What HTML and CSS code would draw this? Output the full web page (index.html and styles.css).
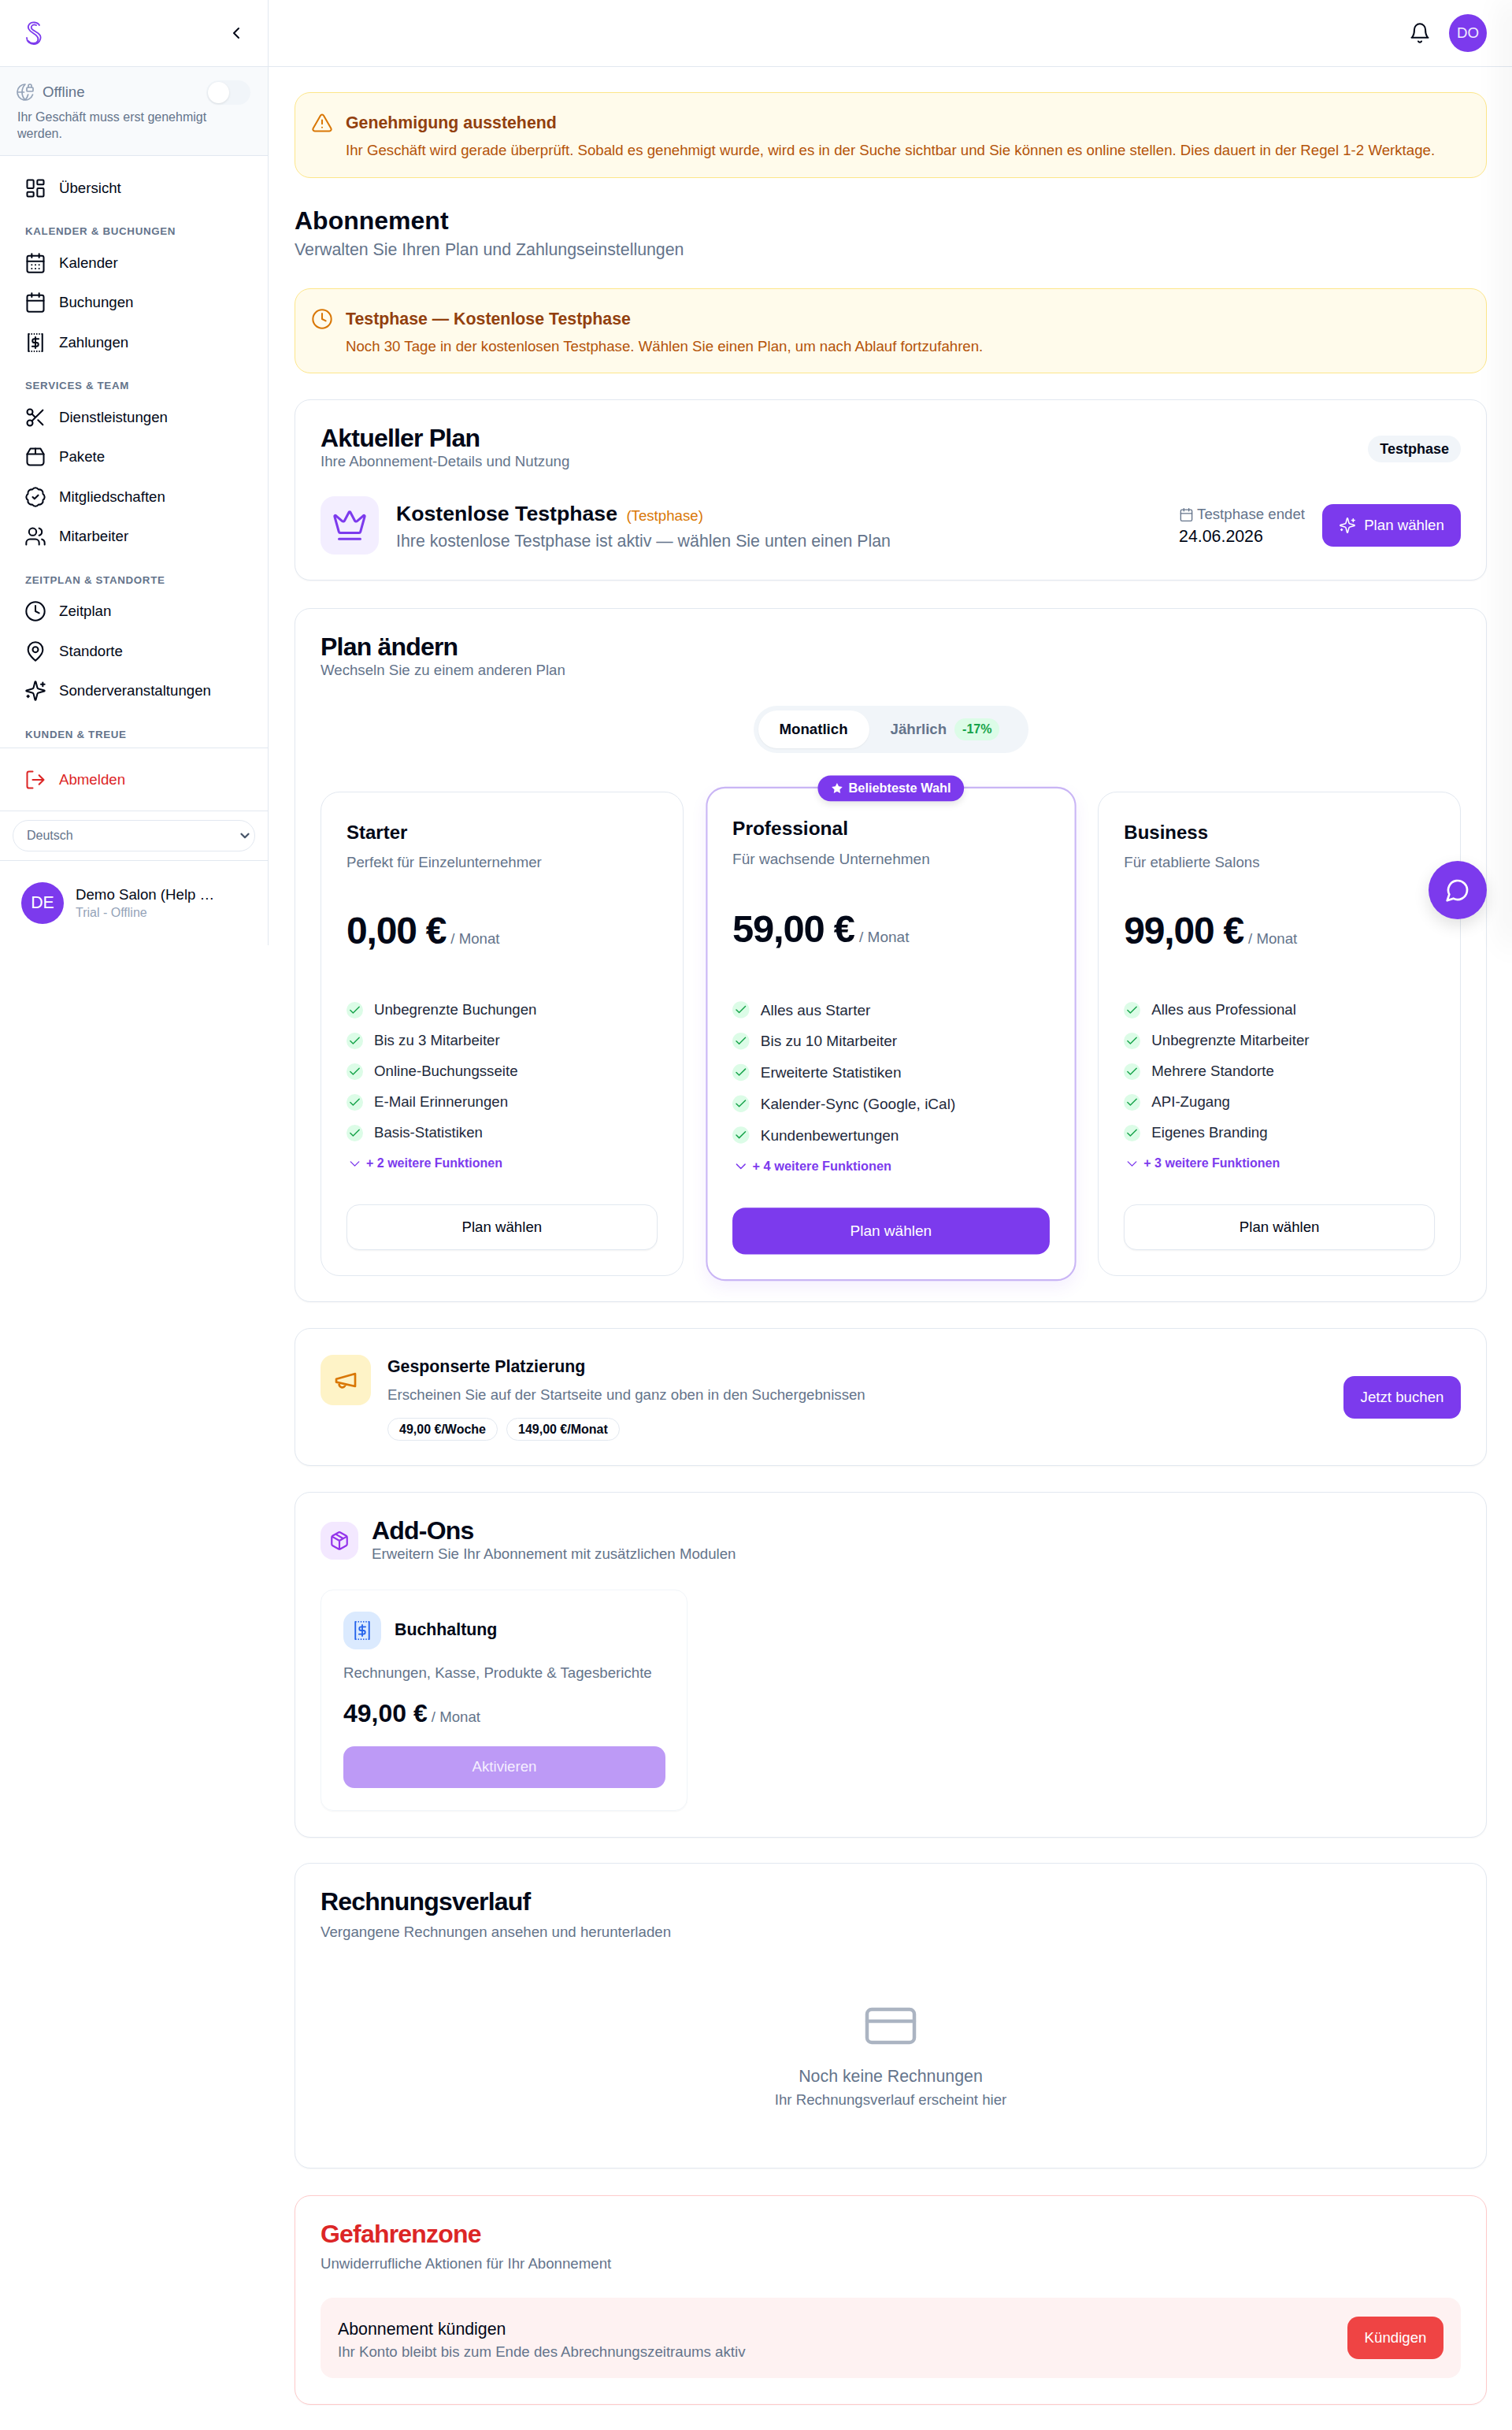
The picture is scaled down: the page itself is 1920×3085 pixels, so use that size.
FILE: index.html
```html
<!DOCTYPE html>
<html lang="de">
<head>
    <meta charset="UTF-8">
    <meta name="viewport" content="width=device-width, initial-scale=1.0">
    <title>Abonnement</title>
    <link rel="stylesheet" href="styles.css">
</head>
<body>
<svg class="sprite" xmlns="http://www.w3.org/2000/svg">
    <symbol id="i-dashboard" viewBox="0 0 24 24"><rect x="3" y="3" width="7" height="9" rx="1"/><rect x="14" y="3" width="7" height="5" rx="1"/><rect x="14" y="12" width="7" height="9" rx="1"/><rect x="3" y="16" width="7" height="5" rx="1"/></symbol>
    <symbol id="i-calendar-days" viewBox="0 0 24 24"><path d="M8 2v4M16 2v4"/><rect x="3" y="4" width="18" height="18" rx="2"/><path d="M3 10h18M8 14h.01M12 14h.01M16 14h.01M8 18h.01M12 18h.01M16 18h.01"/></symbol>
    <symbol id="i-calendar" viewBox="0 0 24 24"><path d="M8 2v4M16 2v4"/><rect x="3" y="4" width="18" height="18" rx="2"/><path d="M3 10h18"/></symbol>
    <symbol id="i-receipt" viewBox="0 0 24 24"><path d="M4.5 2.5v19M19.5 2.5v19"/><path d="M4.5 2.5h15M4.5 21.5h15" stroke-dasharray="1.2 1.6" stroke-linecap="butt"/><path d="M15.5 8h-4.7a2 2 0 0 0 0 4h2.4a2 2 0 0 1 0 4H8.5M12 6v12"/></symbol>
    <symbol id="i-scissors" viewBox="0 0 24 24"><circle cx="6" cy="6" r="3"/><path d="M8.12 8.12 12 12M20 4 8.12 15.88"/><circle cx="6" cy="18" r="3"/><path d="M14.8 14.8 20 20"/></symbol>
    <symbol id="i-box" viewBox="0 0 24 24"><path d="M6.5 3h11L21 9v9a3 3 0 0 1-3 3H6a3 3 0 0 1-3-3V9Z"/><path d="M3 9h18M12 3v6"/></symbol>
    <symbol id="i-badge" viewBox="0 0 24 24"><path d="M3.85 8.62a4 4 0 0 1 4.78-4.77 4 4 0 0 1 6.74 0 4 4 0 0 1 4.78 4.78 4 4 0 0 1 0 6.74 4 4 0 0 1-4.77 4.78 4 4 0 0 1-6.75 0 4 4 0 0 1-4.78-4.77 4 4 0 0 1 0-6.76Z"/><path d="m9 12 2 2 4-4"/></symbol>
    <symbol id="i-users" viewBox="0 0 24 24"><path d="M16 21v-2a4 4 0 0 0-4-4H6a4 4 0 0 0-4 4v2"/><circle cx="9" cy="7" r="4"/><path d="M22 21v-2a4 4 0 0 0-3-3.87M16 3.13a4 4 0 0 1 0 7.75"/></symbol>
    <symbol id="i-clock" viewBox="0 0 24 24"><circle cx="12" cy="12" r="10"/><path d="M12 6v6l4 2"/></symbol>
    <symbol id="i-pin" viewBox="0 0 24 24"><path d="M20 10c0 6-8 12-8 12s-8-6-8-12a8 8 0 0 1 16 0Z"/><circle cx="12" cy="10" r="3"/></symbol>
    <symbol id="i-sparkles" viewBox="0 0 24 24"><path d="M9.937 15.5A2 2 0 0 0 8.5 14.063l-6.135-1.582a.5.5 0 0 1 0-.962L8.5 9.936A2 2 0 0 0 9.937 8.5l1.582-6.135a.5.5 0 0 1 .963 0L14.063 8.5A2 2 0 0 0 15.5 9.937l6.135 1.581a.5.5 0 0 1 0 .964L15.5 14.063a2 2 0 0 0-1.437 1.437l-1.582 6.135a.5.5 0 0 1-.963 0z"/><path d="M20 3v4M22 5h-4M4 17v2M5 18H3"/></symbol>
    <symbol id="i-logout" viewBox="0 0 24 24"><path d="M9 21H5a2 2 0 0 1-2-2V5a2 2 0 0 1 2-2h4M16 17l5-5-5-5M21 12H9"/></symbol>
    <symbol id="i-bell" viewBox="0 0 24 24"><path d="M6 8a6 6 0 0 1 12 0c0 7 3 9 3 9H3s3-2 3-9M10.3 21a1.94 1.94 0 0 0 3.4 0"/></symbol>
    <symbol id="i-alert" viewBox="0 0 24 24"><path d="m21.73 18-8-14a2 2 0 0 0-3.48 0l-8 14A2 2 0 0 0 4 21h16a2 2 0 0 0 1.73-3M12 9v4M12 17h.01"/></symbol>
    <symbol id="i-crown" viewBox="0 0 24 24"><path d="M11.562 3.266a.5.5 0 0 1 .876 0L15.39 8.87a1 1 0 0 0 1.516.294L21.183 5.5a.5.5 0 0 1 .798.519l-2.834 10.246a1 1 0 0 1-.956.734H5.81a1 1 0 0 1-.957-.734L2.02 6.02a.5.5 0 0 1 .798-.519l4.276 3.664a1 1 0 0 0 1.516-.294z"/><path d="M5 21h14"/></symbol>
    <symbol id="i-check" viewBox="0 0 24 24"><path d="M20 6 9 17l-5-5"/></symbol>
    <symbol id="i-down" viewBox="0 0 24 24"><path d="m6 9 6 6 6-6"/></symbol>
    <symbol id="i-left" viewBox="0 0 24 24"><path d="m15 18-6-6 6-6"/></symbol>
    <symbol id="i-megaphone" viewBox="0 0 24 24"><path d="m3 11 18-5v12L3 14v-3zM11.6 16.8a3 3 0 1 1-5.8-1.6"/></symbol>
    <symbol id="i-package" viewBox="0 0 24 24"><path d="M11 21.73a2 2 0 0 0 2 0l7-4A2 2 0 0 0 21 16V8a2 2 0 0 0-1-1.73l-7-4a2 2 0 0 0-2 0l-7 4A2 2 0 0 0 3 8v8a2 2 0 0 0 1 1.73zM12 22V12M3.3 7l8.7 5 8.7-5M7.5 4.27l9 5.15"/></symbol>
    <symbol id="i-card" viewBox="0 0 24 24"><rect x="2" y="5" width="20" height="14" rx="2"/><path d="M2 10h20"/></symbol>
    <symbol id="i-chat" viewBox="0 0 24 24"><path d="M7.9 20A9 9 0 1 0 4 16.1L2 22Z"/></symbol>
    <symbol id="i-globe" viewBox="0 0 24 24"><path d="M15.686 15A14.5 14.5 0 0 1 12 22a14.5 14.5 0 0 1 0-20 10 10 0 1 0 9.542 13M2 12h8.5M20 6V4a2 2 0 1 0-4 0v2"/><rect x="14" y="6" width="8" height="5" rx="1"/></symbol>
</svg>

<div class="app">
    <aside class="sidebar">
        <div class="brand">
            <svg class="logo" viewBox="0 0 21 30"><path d="M18 5C16 1 8 0 5 4 2 8 5 12 10 15c5 3 8 6 6 10-2 4-9 4-12 0"/><path d="M14 5c-4-2-7 1-6 4 1 3 8 4 11 9 2 5-2 11-8 11-5 0-9-3-9-8"/></svg>
            <svg class="icon brand-toggle"><use href="#i-left"/></svg>
        </div>
        <div class="status">
            <div class="status-row">
                <svg class="icon status-icon"><use href="#i-globe"/></svg>
                <span class="status-name">Offline</span>
                <span class="switch"><span class="switch-thumb"></span></span>
            </div>
            <p class="status-text">Ihr Geschäft muss erst genehmigt werden.</p>
        </div>
        <nav class="nav">
            <a class="nav-item"><svg class="icon"><use href="#i-dashboard"/></svg>Übersicht</a>
            <div class="nav-label">Kalender &amp; Buchungen</div>
            <a class="nav-item"><svg class="icon"><use href="#i-calendar-days"/></svg>Kalender</a>
            <a class="nav-item"><svg class="icon"><use href="#i-calendar"/></svg>Buchungen</a>
            <a class="nav-item"><svg class="icon"><use href="#i-receipt"/></svg>Zahlungen</a>
            <div class="nav-label">Services &amp; Team</div>
            <a class="nav-item"><svg class="icon"><use href="#i-scissors"/></svg>Dienstleistungen</a>
            <a class="nav-item"><svg class="icon"><use href="#i-box"/></svg>Pakete</a>
            <a class="nav-item"><svg class="icon"><use href="#i-badge"/></svg>Mitgliedschaften</a>
            <a class="nav-item"><svg class="icon"><use href="#i-users"/></svg>Mitarbeiter</a>
            <div class="nav-label">Zeitplan &amp; Standorte</div>
            <a class="nav-item"><svg class="icon"><use href="#i-clock"/></svg>Zeitplan</a>
            <a class="nav-item"><svg class="icon"><use href="#i-pin"/></svg>Standorte</a>
            <a class="nav-item"><svg class="icon"><use href="#i-sparkles"/></svg>Sonderveranstaltungen</a>
            <div class="nav-label">Kunden &amp; Treue</div>
        </nav>
        <div class="logout">
            <a class="nav-item nav-item-danger"><svg class="icon"><use href="#i-logout"/></svg>Abmelden</a>
        </div>
        <div class="lang">
            <div class="lang-select">Deutsch<svg class="icon lang-arrow"><use href="#i-down"/></svg></div>
        </div>
        <div class="account">
            <span class="account-avatar">DE</span>
            <div class="account-info">
                <div class="account-name">Demo Salon (Help …</div>
                <div class="account-sub">Trial - Offline</div>
            </div>
        </div>
    </aside>

    <div class="main">
        <header class="topbar">
            <svg class="icon topbar-bell"><use href="#i-bell"/></svg>
            <span class="topbar-avatar">DO</span>
        </header>
        <div class="content">
            <div class="alert">
                <svg class="icon alert-icon"><use href="#i-alert"/></svg>
                <div>
                    <div class="alert-title">Genehmigung ausstehend</div>
                    <div class="alert-text">Ihr Geschäft wird gerade überprüft. Sobald es genehmigt wurde, wird es in der Suche sichtbar und Sie können es online stellen. Dies dauert in der Regel 1-2 Werktage.</div>
                </div>
            </div>

            <div class="page-head">
                <h1>Abonnement</h1>
                <p>Verwalten Sie Ihren Plan und Zahlungseinstellungen</p>
            </div>

            <div class="alert">
                <svg class="icon alert-icon"><use href="#i-clock"/></svg>
                <div>
                    <div class="alert-title">Testphase — Kostenlose Testphase</div>
                    <div class="alert-text">Noch 30 Tage in der kostenlosen Testphase. Wählen Sie einen Plan, um nach Ablauf fortzufahren.</div>
                </div>
            </div>

            <section class="card card-current">
                <div class="card-head">
                    <div>
                        <h2>Aktueller Plan</h2>
                        <p class="card-sub">Ihre Abonnement-Details und Nutzung</p>
                    </div>
                    <span class="badge-soft">Testphase</span>
                </div>
                <div class="current-row">
                    <div class="tile tile-crown"><svg class="icon"><use href="#i-crown"/></svg></div>
                    <div class="current-info">
                        <div class="current-name">Kostenlose Testphase <span class="current-tag">(Testphase)</span></div>
                        <div class="current-desc">Ihre kostenlose Testphase ist aktiv — wählen Sie unten einen Plan</div>
                    </div>
                    <div class="current-end">
                        <div class="current-end-label"><svg class="icon"><use href="#i-calendar"/></svg>Testphase endet</div>
                        <div class="current-end-date">24.06.2026</div>
                    </div>
                    <a class="btn btn-primary btn-choose"><svg class="icon"><use href="#i-sparkles"/></svg>Plan wählen</a>
                </div>
            </section>

            <section class="card card-plans">
                <h2>Plan ändern</h2>
                <p class="card-sub">Wechseln Sie zu einem anderen Plan</p>
                <div class="billing-wrap">
                    <div class="billing">
                        <span class="billing-opt billing-active">Monatlich</span>
                        <span class="billing-opt">Jährlich <span class="billing-save">-17%</span></span>
                    </div>
                </div>
                <div class="plans">
                    <div class="plan">
                        <h3>Starter</h3>
                        <p class="plan-sub">Perfekt für Einzelunternehmer</p>
                        <div class="plan-price"><b>0,00 €</b> <span>/ Monat</span></div>
                        <ul class="plan-list">
                            <li><span class="tick"><svg class="icon"><use href="#i-check"/></svg></span>Unbegrenzte Buchungen</li>
                            <li><span class="tick"><svg class="icon"><use href="#i-check"/></svg></span>Bis zu 3 Mitarbeiter</li>
                            <li><span class="tick"><svg class="icon"><use href="#i-check"/></svg></span>Online-Buchungsseite</li>
                            <li><span class="tick"><svg class="icon"><use href="#i-check"/></svg></span>E-Mail Erinnerungen</li>
                            <li><span class="tick"><svg class="icon"><use href="#i-check"/></svg></span>Basis-Statistiken</li>
                        </ul>
                        <div class="plan-more"><svg class="icon"><use href="#i-down"/></svg>+ 2 weitere Funktionen</div>
                        <a class="btn btn-outline plan-btn">Plan wählen</a>
                    </div>
                    <div class="plan plan-featured">
                        <span class="plan-flag"><svg viewBox="0 0 24 24"><path d="M12 2l3.1 6.3 6.9 1-5 4.9 1.2 6.9-6.2-3.3-6.2 3.3L7 14.2 2 9.3l6.9-1z"/></svg>Beliebteste Wahl</span>
                        <h3>Professional</h3>
                        <p class="plan-sub">Für wachsende Unternehmen</p>
                        <div class="plan-price"><b>59,00 €</b> <span>/ Monat</span></div>
                        <ul class="plan-list">
                            <li><span class="tick"><svg class="icon"><use href="#i-check"/></svg></span>Alles aus Starter</li>
                            <li><span class="tick"><svg class="icon"><use href="#i-check"/></svg></span>Bis zu 10 Mitarbeiter</li>
                            <li><span class="tick"><svg class="icon"><use href="#i-check"/></svg></span>Erweiterte Statistiken</li>
                            <li><span class="tick"><svg class="icon"><use href="#i-check"/></svg></span>Kalender-Sync (Google, iCal)</li>
                            <li><span class="tick"><svg class="icon"><use href="#i-check"/></svg></span>Kundenbewertungen</li>
                        </ul>
                        <div class="plan-more"><svg class="icon"><use href="#i-down"/></svg>+ 4 weitere Funktionen</div>
                        <a class="btn btn-primary plan-btn">Plan wählen</a>
                    </div>
                    <div class="plan">
                        <h3>Business</h3>
                        <p class="plan-sub">Für etablierte Salons</p>
                        <div class="plan-price"><b>99,00 €</b> <span>/ Monat</span></div>
                        <ul class="plan-list">
                            <li><span class="tick"><svg class="icon"><use href="#i-check"/></svg></span>Alles aus Professional</li>
                            <li><span class="tick"><svg class="icon"><use href="#i-check"/></svg></span>Unbegrenzte Mitarbeiter</li>
                            <li><span class="tick"><svg class="icon"><use href="#i-check"/></svg></span>Mehrere Standorte</li>
                            <li><span class="tick"><svg class="icon"><use href="#i-check"/></svg></span>API-Zugang</li>
                            <li><span class="tick"><svg class="icon"><use href="#i-check"/></svg></span>Eigenes Branding</li>
                        </ul>
                        <div class="plan-more"><svg class="icon"><use href="#i-down"/></svg>+ 3 weitere Funktionen</div>
                        <a class="btn btn-outline plan-btn">Plan wählen</a>
                    </div>
                </div>
            </section>

            <section class="card card-sponsored">
                <div class="tile tile-amber"><svg class="icon"><use href="#i-megaphone"/></svg></div>
                <div class="sponsored-info">
                    <div class="sponsored-title">Gesponserte Platzierung</div>
                    <div class="sponsored-text">Erscheinen Sie auf der Startseite und ganz oben in den Suchergebnissen</div>
                    <div class="sponsored-prices">
                        <span class="price-pill">49,00 €/Woche</span>
                        <span class="price-pill">149,00 €/Monat</span>
                    </div>
                </div>
                <a class="btn btn-primary btn-book">Jetzt buchen</a>
            </section>

            <section class="card card-addons">
                <div class="addons-head">
                    <div class="tile tile-violet"><svg class="icon"><use href="#i-package"/></svg></div>
                    <div>
                        <h2>Add-Ons</h2>
                        <p class="card-sub">Erweitern Sie Ihr Abonnement mit zusätzlichen Modulen</p>
                    </div>
                </div>
                <div class="addon">
                    <div class="addon-head">
                        <div class="tile tile-blue"><svg class="icon"><use href="#i-receipt"/></svg></div>
                        <div class="addon-name">Buchhaltung</div>
                    </div>
                    <p class="addon-text">Rechnungen, Kasse, Produkte &amp; Tagesberichte</p>
                    <div class="addon-price"><b>49,00 €</b> <span>/ Monat</span></div>
                    <a class="btn btn-muted addon-btn">Aktivieren</a>
                </div>
            </section>

            <section class="card card-invoices">
                <h2>Rechnungsverlauf</h2>
                <p class="card-sub">Vergangene Rechnungen ansehen und herunterladen</p>
                <div class="empty">
                    <svg class="icon empty-icon"><use href="#i-card"/></svg>
                    <div class="empty-title">Noch keine Rechnungen</div>
                    <div class="empty-text">Ihr Rechnungsverlauf erscheint hier</div>
                </div>
            </section>

            <section class="card card-danger">
                <h2>Gefahrenzone</h2>
                <p class="card-sub">Unwiderrufliche Aktionen für Ihr Abonnement</p>
                <div class="danger-box">
                    <div class="danger-info">
                        <div class="danger-title">Abonnement kündigen</div>
                        <div class="danger-text">Ihr Konto bleibt bis zum Ende des Abrechnungszeitraums aktiv</div>
                    </div>
                    <a class="btn btn-danger">Kündigen</a>
                </div>
            </section>
        </div>
    </div>
</div>

<a class="chat-fab"><svg class="icon"><use href="#i-chat"/></svg></a>
<div class="drawer-edge"></div>
</body>
</html>
```

FILE: styles.css
```css
* {
    box-sizing: border-box;
}
html, body {
    margin: 0;
    padding: 0;
}
body {
    position: relative;
    height: 3085px;
    overflow: hidden;
    background: #fff;
    color: #020817;
    font-family: "Liberation Sans", Arial, sans-serif;
}
h1, h2, h3, p, ul {
    margin: 0;
    padding: 0;
}
.sprite {
    display: none;
}
.icon {
    width: 24px;
    height: 24px;
    flex: none;
    fill: none;
    stroke: currentColor;
    stroke-width: 2;
    stroke-linecap: round;
    stroke-linejoin: round;
}
.app {
    display: flex;
    align-items: flex-start;
}

/* sidebar */
.sidebar {
    width: 341px;
    height: 1200px;
    flex: none;
    border-right: 1px solid #e2e8f0;
}
.brand {
    height: 85px;
    display: flex;
    align-items: center;
    justify-content: space-between;
    padding: 0 28px 0 32px;
    border-bottom: 1px solid #e2e8f0;
}
.logo {
    width: 21px;
    height: 30px;
    fill: none;
    stroke: #7c3aed;
    stroke-width: 1.8;
    stroke-linecap: round;
}
.brand-toggle {
    width: 24px;
    height: 24px;
}
.status {
    height: 113px;
    padding: 18px 22px 0;
    background: #f8fafc;
    border-bottom: 1px solid #e2e8f0;
}
.status-row {
    display: flex;
    align-items: center;
    height: 28px;
    color: #64748b;
}
.status-icon {
    width: 24px;
    height: 24px;
    margin-left: -2px;
    margin-right: 10px;
    color: #94a3b8;
    stroke-width: 1.7;
}
.status-name {
    font-size: 18.67px;
    flex: 1;
}
.switch {
    width: 56px;
    height: 31px;
    border-radius: 16px;
    background: #f1f5f9;
    padding: 2px;
}
.switch-thumb {
    display: block;
    width: 27px;
    height: 27px;
    border-radius: 50%;
    background: #fff;
    box-shadow: 0 1px 3px rgba(0, 0, 0, .1);
}
.status-text {
    font-size: 16px;
    line-height: 21px;
    color: #64748b;
    margin-top: 7px;
    padding-right: 24px;
}
.nav {
    height: 751px;
    padding: 15.5px 0 0 32px;
}
.nav-item {
    display: flex;
    align-items: center;
    gap: 16px;
    height: 50.5px;
    font-size: 18.67px;
    color: #020817;
}
.nav-item .icon {
    width: 28px;
    height: 28px;
    margin-left: -1px;
    stroke-width: 1.75;
}
.nav-label {
    height: 30px;
    margin-top: 14.5px;
    display: flex;
    align-items: center;
    font-size: 13.33px;
    font-weight: 700;
    letter-spacing: .67px;
    text-transform: uppercase;
    color: #64748b;
}
.logout {
    height: 81px;
    padding: 15px 0 0 32px;
    border-top: 1px solid #e2e8f0;
    border-bottom: 1px solid #e2e8f0;
}
.nav-item-danger {
    color: #dc2626;
}
.lang {
    height: 63px;
    padding: 11px 16px 0;
    border-bottom: 1px solid #e2e8f0;
}
.lang-select {
    height: 40px;
    display: flex;
    align-items: center;
    justify-content: space-between;
    padding: 0 0 0 17px;
    border: 1px solid #e2e8f0;
    border-radius: 20px;
    font-size: 16px;
    color: #64748b;
}
.lang-arrow {
    width: 18px;
    height: 18px;
    stroke-width: 3;
    margin-right: 3px;
    color: #475569;
}
.account {
    display: flex;
    align-items: center;
    gap: 15px;
    padding: 27px 27px 0;
}
.account-avatar {
    width: 54px;
    height: 53px;
    flex: none;
    display: flex;
    align-items: center;
    justify-content: center;
    border-radius: 50%;
    background: #7c3aed;
    color: #fff;
    font-size: 21.33px;
}
.account-name {
    font-size: 18.67px;
    line-height: 23px;
    white-space: nowrap;
}
.account-sub {
    font-size: 16px;
    line-height: 23px;
    color: #94a3b8;
}

/* main column */
.main {
    flex: 1;
    min-width: 0;
}
.topbar {
    height: 85px;
    display: flex;
    align-items: center;
    justify-content: flex-end;
    gap: 23px;
    padding: 0 32px;
    border-bottom: 1px solid #e2e8f0;
}
.topbar-bell {
    width: 28px;
    height: 28px;
    stroke-width: 1.75;
}
.topbar-avatar {
    width: 48px;
    height: 48px;
    display: flex;
    align-items: center;
    justify-content: center;
    border-radius: 50%;
    background: #7c3aed;
    color: #f3ecff;
    font-size: 18.67px;
}
.content {
    padding: 32px 32px 0 33px;
}
.alert {
    height: 108.5px;
    display: flex;
    gap: 16px;
    padding: 25px 20px 0;
    border: 1px solid #fde68a;
    border-radius: 20px;
    background: #fffbeb;
}
.alert-icon {
    width: 28px;
    height: 28px;
    stroke-width: 1.75;
    color: #d97706;
    margin-top: -1px;
}
.alert-title {
    font-size: 21.33px;
    line-height: 26px;
    font-weight: 700;
    color: #92400e;
}
.alert-text {
    font-size: 18.67px;
    line-height: 26px;
    margin-top: 9px;
    color: #b45309;
}
.page-head {
    padding: 35px 0 35px;
}
.page-head h1 {
    font-size: 32px;
    line-height: 38px;
    font-weight: 700;
}
.page-head p {
    font-size: 21.33px;
    line-height: 28px;
    color: #64748b;
    margin-top: 4px;
}

/* cards */
.card {
    margin-top: 33px;
    border: 1px solid #e2e8f0;
    border-radius: 20px;
    padding: 30px 32px 32px;
    background: #fff;
    box-shadow: 0 1px 2px rgba(0, 0, 0, .04);
}
.card h2 {
    font-size: 32px;
    line-height: 36px;
    letter-spacing: -.8px;
    font-weight: 700;
}
.card-sub {
    font-size: 18.67px;
    line-height: 24px;
    color: #64748b;
}
.card-head {
    display: flex;
    justify-content: space-between;
}
.badge-soft {
    align-self: flex-start;
    margin-top: 15px;
    padding: 0 15px;
    height: 34px;
    line-height: 34px;
    border-radius: 17px;
    background: #f1f5f9;
    font-size: 18px;
    font-weight: 700;
}
.tile {
    flex: none;
    display: flex;
    align-items: center;
    justify-content: center;
    border-radius: 16px;
}
.current-row {
    display: flex;
    align-items: center;
    margin-top: 32px;
}
.tile-crown {
    width: 74px;
    height: 74px;
    border-radius: 18px;
    background: #f3eeff;
    color: #7c3aed;
}
.tile-crown .icon {
    width: 46px;
    height: 46px;
    stroke-width: 1.6;
}
.current-info {
    flex: 1;
    margin-left: 22px;
    padding-top: 2px;
}
.current-name {
    font-size: 26.67px;
    line-height: 32px;
    font-weight: 700;
}
.current-tag {
    font-size: 18.67px;
    font-weight: 400;
    color: #d97706;
    margin-left: 4px;
}
.current-desc {
    font-size: 21.33px;
    line-height: 28px;
    margin-top: 2px;
    color: #64748b;
}
.current-end {
    margin-right: 22px;
    white-space: nowrap;
}
.current-end-label {
    display: flex;
    align-items: center;
    gap: 4px;
    font-size: 18.67px;
    line-height: 28px;
    color: #64748b;
}
.current-end-label .icon {
    width: 19px;
    height: 19px;
    stroke-width: 1.7;
}
.current-end-date {
    font-size: 21.33px;
    line-height: 28px;
}
.btn {
    display: flex;
    align-items: center;
    justify-content: center;
    font-size: 18.67px;
    border-radius: 14px;
}
.btn-primary {
    background: #7c3aed;
    color: #fff;
}
.btn-choose {
    width: 176px;
    height: 54px;
    gap: 10px;
}
.btn-choose .icon {
    width: 22px;
    height: 22px;
    stroke-width: 1.7;
}
.btn-outline {
    border: 1px solid #e2e8f0;
    background: #fff;
    box-shadow: 0 1px 2px rgba(0, 0, 0, .05);
}
.btn-muted {
    background: #bd9af6;
    color: #f5efff;
}
.btn-danger {
    width: 122px;
    height: 54px;
    background: #ef4444;
    color: #fff;
}

/* plans */
.card-plans {
    margin-top: 34.5px;
}
.billing-wrap {
    display: flex;
    justify-content: center;
    margin-top: 33px;
}
.billing {
    height: 60px;
    width: 349px;
    display: flex;
    align-items: center;
    padding: 0 6px;
    border-radius: 30px;
    background: #f1f5f9;
}
.billing-opt {
    height: 48px;
    display: flex;
    align-items: center;
    padding: 0 27px;
    font-size: 18.67px;
    font-weight: 700;
    color: #64748b;
    border-radius: 24px;
    white-space: nowrap;
}
.billing-active {
    background: #fff;
    color: #020817;
    box-shadow: 0 1px 2px rgba(0, 0, 0, .05);
}
.billing-save {
    margin-left: 10px;
    padding: 5px 10px;
    border-radius: 14px;
    background: #dcfce7;
    color: #16a34a;
    font-size: 16px;
    font-weight: 700;
}
.plans {
    display: grid;
    grid-template-columns: repeat(3, 1fr);
    gap: 33px;
    margin-top: 49px;
}
.plan {
    position: relative;
    height: 615px;
    display: flex;
    flex-direction: column;
    padding: 36px 32px 32px;
    border: 1px solid #e2e8f0;
    border-radius: 24px;
    background: #fff;
}
.plan-featured {
    border: 2px solid #c9b5f5;
    padding: 35px 31px 31px;
    transform: scale(1.02);
    box-shadow: 0 8px 20px rgba(124, 58, 237, .08);
}
.plan h3 {
    font-size: 24px;
    line-height: 30px;
    font-weight: 700;
}
.plan-sub {
    font-size: 18.67px;
    line-height: 24px;
    margin-top: 11px;
    color: #64748b;
}
.plan-price {
    display: flex;
    align-items: baseline;
    gap: 6px;
    height: 50px;
    margin-top: 50px;
    line-height: 50px;
}
.plan-price b {
    font-size: 48px;
    letter-spacing: -1.2px;
    font-weight: 700;
}
.plan-price span {
    font-size: 18.67px;
    color: #64748b;
}
.plan-list {
    list-style: none;
    margin-top: 65px;
}
.plan-list li {
    display: flex;
    align-items: center;
    gap: 14px;
    height: 21px;
    margin-bottom: 18px;
    font-size: 18.67px;
    color: #1e293b;
}
.tick {
    width: 21px;
    height: 21px;
    flex: none;
    display: flex;
    align-items: center;
    justify-content: center;
    border-radius: 50%;
    background: #dcfce7;
    color: #16a34a;
}
.tick .icon {
    width: 17px;
    height: 17px;
}
.plan-more {
    display: flex;
    align-items: center;
    gap: 4px;
    height: 21px;
    font-size: 16px;
    font-weight: 700;
    color: #7c3aed;
}
.plan-more .icon {
    width: 21px;
    height: 21px;
    stroke-width: 1.6;
}
.plan-btn {
    height: 58px;
    margin-top: auto;
    border-radius: 16px;
}
.plan-flag {
    position: absolute;
    top: -16.5px;
    left: 50%;
    transform: translateX(-50%);
    height: 32px;
    display: flex;
    align-items: center;
    gap: 6px;
    padding: 0 16px;
    border-radius: 17px;
    background: #7c3aed;
    color: #fff;
    font-size: 16px;
    font-weight: 700;
    white-space: nowrap;
    box-shadow: 0 4px 8px rgba(0, 0, 0, .1);
}
.plan-flag svg {
    width: 16px;
    height: 16px;
    fill: #fff;
}

/* sponsored */
.card-sponsored {
    display: flex;
    align-items: flex-start;
    height: 175px;
    padding: 33px 32px 0;
}
.tile-amber {
    width: 64px;
    height: 64px;
    background: #fef3c7;
    color: #d97706;
}
.tile-amber .icon {
    width: 32px;
    height: 32px;
}
.sponsored-info {
    flex: 1;
    margin-left: 21px;
}
.sponsored-title {
    font-size: 21.33px;
    line-height: 30px;
    font-weight: 700;
}
.sponsored-text {
    font-size: 18.67px;
    line-height: 26px;
    margin-top: 8px;
    color: #64748b;
}
.sponsored-prices {
    display: flex;
    gap: 11px;
    margin-top: 16px;
}
.price-pill {
    height: 29px;
    line-height: 27px;
    padding: 0 14px;
    border: 1px solid #e2e8f0;
    border-radius: 15px;
    font-size: 16px;
    font-weight: 700;
}
.btn-book {
    width: 149px;
    height: 54px;
    margin-top: 27px;
}

/* add-ons */
.card-addons {
    height: 439px;
}
.addons-head {
    display: flex;
    align-items: flex-start;
    gap: 17px;
}
.tile-violet {
    width: 48px;
    height: 48px;
    margin-top: 7px;
    background: #f3e8ff;
    color: #9333ea;
}
.tile-violet .icon {
    width: 26px;
    height: 26px;
}
.addon {
    width: 466px;
    height: 281px;
    margin-top: 33px;
    padding: 27px 28px 0;
    border: 1px solid #f1f5f9;
    border-radius: 16px;
    box-shadow: 0 1px 2px rgba(0, 0, 0, .04);
}
.addon-head {
    display: flex;
    align-items: center;
    gap: 17px;
}
.tile-blue {
    width: 48px;
    height: 48px;
    background: #dbeafe;
    color: #2563eb;
}
.tile-blue .icon {
    width: 28px;
    height: 28px;
    stroke-width: 1.6;
}
.addon-name {
    font-size: 21.33px;
    font-weight: 700;
}
.addon-text {
    font-size: 18.67px;
    line-height: 24px;
    margin-top: 18px;
    color: #64748b;
}
.addon-price {
    display: flex;
    align-items: baseline;
    gap: 5px;
    height: 42px;
    margin-top: 18px;
    line-height: 42px;
}
.addon-price b {
    font-size: 32px;
    font-weight: 700;
}
.addon-price span {
    font-size: 18.67px;
    color: #64748b;
}
.addon-btn {
    width: 409px;
    height: 53px;
    margin-top: 21px;
}

/* invoices */
.card-invoices {
    height: 388px;
    margin-top: 32.5px;
}
.card-invoices .card-sub {
    margin-top: 9px;
}
.empty {
    display: flex;
    flex-direction: column;
    align-items: center;
    padding-top: 71px;
}
.empty-icon {
    width: 72px;
    height: 72px;
    color: #abb4c2;
    stroke-width: 1.5;
}
.empty-title {
    font-size: 21.33px;
    line-height: 28px;
    color: #64748b;
    margin-top: 14px;
}
.empty-text {
    font-size: 18.67px;
    line-height: 26px;
    margin-top: 3px;
    color: #64748b;
}

/* danger */
.card-danger {
    height: 266px;
    margin-top: 34px;
    border-color: #fecaca;
}
.card-danger h2 {
    color: #dc2626;
}
.card-danger .card-sub {
    margin-top: 8px;
}
.danger-box {
    display: flex;
    align-items: center;
    justify-content: space-between;
    height: 102px;
    margin-top: 31px;
    padding: 0 22px;
    border-radius: 16px;
    background: #fef2f2;
}
.danger-info {
    margin-top: 6px;
}
.danger-title {
    font-size: 21.33px;
    line-height: 26px;
}
.danger-text {
    font-size: 18.67px;
    line-height: 26px;
    margin-top: 3px;
    color: #64748b;
}

/* floating */
.chat-fab {
    position: absolute;
    top: 1093px;
    right: 32px;
    width: 74px;
    height: 74px;
    display: flex;
    align-items: center;
    justify-content: center;
    border-radius: 50%;
    background: #7c3aed;
    color: #fff;
    box-shadow: 0 8px 20px rgba(0, 0, 0, .12);
}
.chat-fab .icon {
    width: 32px;
    height: 32px;
}
.drawer-edge {
    position: absolute;
    top: 0;
    right: -10px;
    width: 10px;
    height: 1200px;
    box-shadow: -4px 0 40px rgba(0, 0, 0, .14);
}
```
